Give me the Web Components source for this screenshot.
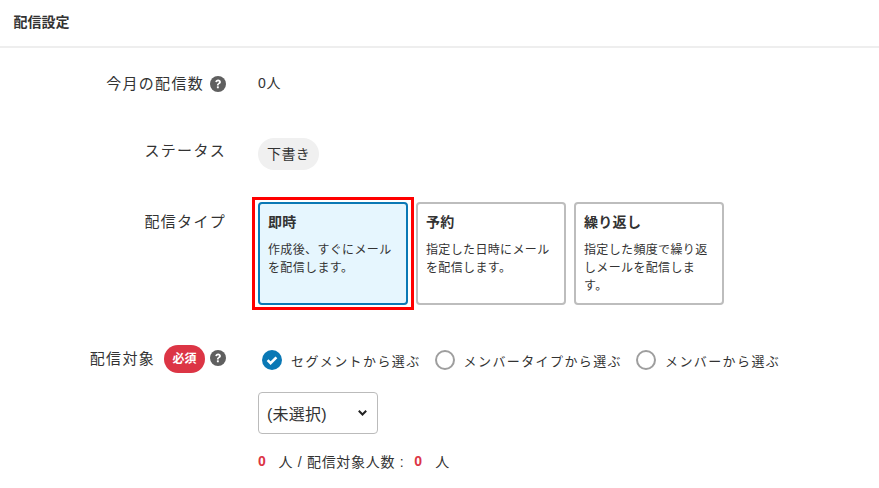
<!DOCTYPE html>
<html lang="ja"><head><meta charset="utf-8">
<style>
html,body{margin:0;padding:0;background:#fff}
body{font-family:"Liberation Sans","Noto Sans CJK JP",sans-serif;color:#333;width:879px;height:488px;overflow:hidden}
</style></head><body>
<settings-page>
  <page-header slot="header">配信設定</page-header>
  <form-row style="--row-h:90px;--label-top:26px">
    <span slot="label">今月の配信数</span><help-icon slot="label-after"></help-icon>
    <div style="padding-top:25px;font-size:14px;letter-spacing:.7px;line-height:20px;color:#333">0人</div>
  </form-row>
  <form-row style="--row-h:64px;--label-top:3px">
    <span slot="label">ステータス</span>
    <status-pill>下書き</status-pill>
  </form-row>
  <form-row style="--row-h:146px;--label-top:10px">
    <span slot="label">配信タイプ</span>
    <div style="display:flex;gap:8px">
      <type-card selected outlined title-text="即時">作成後、すぐにメールを配信します。</type-card>
      <type-card title-text="予約">指定した日時にメールを配信します。</type-card>
      <type-card title-text="繰り返し">指定した頻度で繰り返しメールを配信します。</type-card>
    </div>
  </form-row>
  <form-row style="--row-h:140px;--label-top:1px">
    <span slot="label">配信対象</span><req-badge slot="label-after"></req-badge><help-icon slot="label-after" style="margin:1px 0 0 5px"></help-icon>
    <div style="display:flex;flex-direction:column;align-items:flex-start">
      <div style="display:flex;gap:14px;padding-left:4px">
        <radio-opt checked>セグメントから選ぶ</radio-opt>
        <radio-opt>メンバータイプから選ぶ</radio-opt>
        <radio-opt>メンバーから選ぶ</radio-opt>
      </div>
      <select-box>(未選択)</select-box>
      <count-line></count-line>
    </div>
  </form-row>
</settings-page>
<script>
function def(name,html){
  customElements.define(name,class extends HTMLElement{
    constructor(){super();this.attachShadow({mode:'open'}).innerHTML=typeof html==='function'?html(this):html;}
  });
}
def('settings-page',`<style>:host{display:block}</style><slot name="header"></slot><slot></slot>`);
def('page-header',`<style>:host{display:block;height:46px;border-bottom:2px solid #eee;padding-left:13.5px;font-size:14px;font-weight:700;line-height:45px;color:#333}</style><slot></slot>`);
def('form-row',`<style>
:host{display:grid;grid-template-columns:226px 1fr;column-gap:32px;height:var(--row-h);font-size:15px;letter-spacing:1.3px;color:#333}
.l{display:flex;justify-content:flex-end;align-items:flex-start;padding-top:var(--label-top);line-height:20px;height:20px}
.c{min-width:0}
</style><div class="l"><slot name="label"></slot><slot name="label-after"></slot></div><div class="c"><slot></slot></div>`);
def('help-icon',`<style>:host{display:block;width:16px;height:16px;margin:2px 0 0 6px;flex:none}svg{display:block}</style>
<svg width="16" height="16" viewBox="0 0 16 16"><circle cx="8" cy="8" r="8" fill="#5f5f5f"/><path d="M5.3 6.1C5.4 4.5 6.6 3.6 8.1 3.6c1.6 0 2.8 1 2.8 2.4 0 1-.6 1.6-1.4 2.1-.6.4-.8.6-.8 1.3H6.9c0-1.2.4-1.7 1.2-2.2.5-.4.9-.6.9-1.1 0-.5-.4-.8-.9-.8-.6 0-1 .4-1.1 1z" fill="#fff"/><rect x="6.9" y="10.3" width="1.9" height="2" rx=".4" fill="#fff"/></svg>`);
def('req-badge',`<style>:host{display:block;width:41px;height:28px;border-radius:14px;background:#dc3545;color:#fff;font-size:12px;font-weight:700;letter-spacing:0;line-height:28px;text-align:center;margin:-4px 0 0 9px;flex:none}</style>必須`);
def('status-pill',`<style>:host{display:inline-block;height:32px;line-height:32px;padding:0 9px;border-radius:16px;background:#f0f0f0;font-size:14px;letter-spacing:.4px;color:#333}</style><slot></slot>`);
def('type-card',el=>`<style>
:host{display:block;position:relative;width:150px;height:103px;box-sizing:border-box;border:2px solid ${el.hasAttribute('selected')?'#0a78b5':'#bdbdbd'};border-radius:4px;background:${el.hasAttribute('selected')?'#e6f6fe':'#fff'};padding:8px 8px}
h3{margin:0 0 9px;font-size:14px;font-weight:700;line-height:20px;letter-spacing:.3px;color:#333}
p{margin:0;font-size:12px;line-height:18px;letter-spacing:.35px;color:#333}
.o{position:absolute;left:-8px;right:-8px;top:-7px;bottom:-7px;border:3px solid #f00;pointer-events:none}
</style><h3>${el.getAttribute('title-text')}</h3><p><slot></slot></p>${el.hasAttribute('outlined')?'<div class="o"></div>':''}`);
def('radio-opt',el=>`<style>
:host{display:inline-flex;align-items:center;height:24px;font-size:13px;letter-spacing:1.4px;color:#333;white-space:nowrap}
svg{display:block;margin-right:9px;flex:none}
</style>${el.hasAttribute('checked')
?`<svg width="20" height="20" viewBox="0 0 20 20"><circle cx="10" cy="10" r="10" fill="#0a78b5"/><path d="M5.6 10.2l3 3 5.8-5.8" fill="none" stroke="#fff" stroke-width="2.6"/></svg>`
:`<svg width="20" height="20" viewBox="0 0 20 20"><circle cx="10" cy="10" r="9" fill="#fff" stroke="#9e9e9e" stroke-width="2"/></svg>`}<slot></slot>`);
def('select-box',`<style>
:host{display:flex;align-items:center;box-sizing:border-box;width:120px;height:42px;margin-top:20px;border:1px solid #bbb;border-radius:4px;padding:0 8px;font-size:16px;letter-spacing:.2px;color:#333;position:relative}
svg{position:absolute;right:10px;top:17px}
</style><slot></slot><svg width="9" height="6" viewBox="0 0 9 6"><path d="M.8.8l3.7 3.7L8.2.8" fill="none" stroke="#222" stroke-width="2"/></svg>`);
def('count-line',`<style>
:host{display:flex;align-items:center;margin-top:17px;height:20px;font-size:14px;letter-spacing:.7px;color:#333;white-space:pre}
b{color:#dc3545;font-weight:700}
</style><b>0</b><span style="margin-left:12px">人 / 配信対象人数 :</span><b style="margin-left:10px">0</b><span style="margin-left:12.5px">人</span>`);
</script>
</body></html>
